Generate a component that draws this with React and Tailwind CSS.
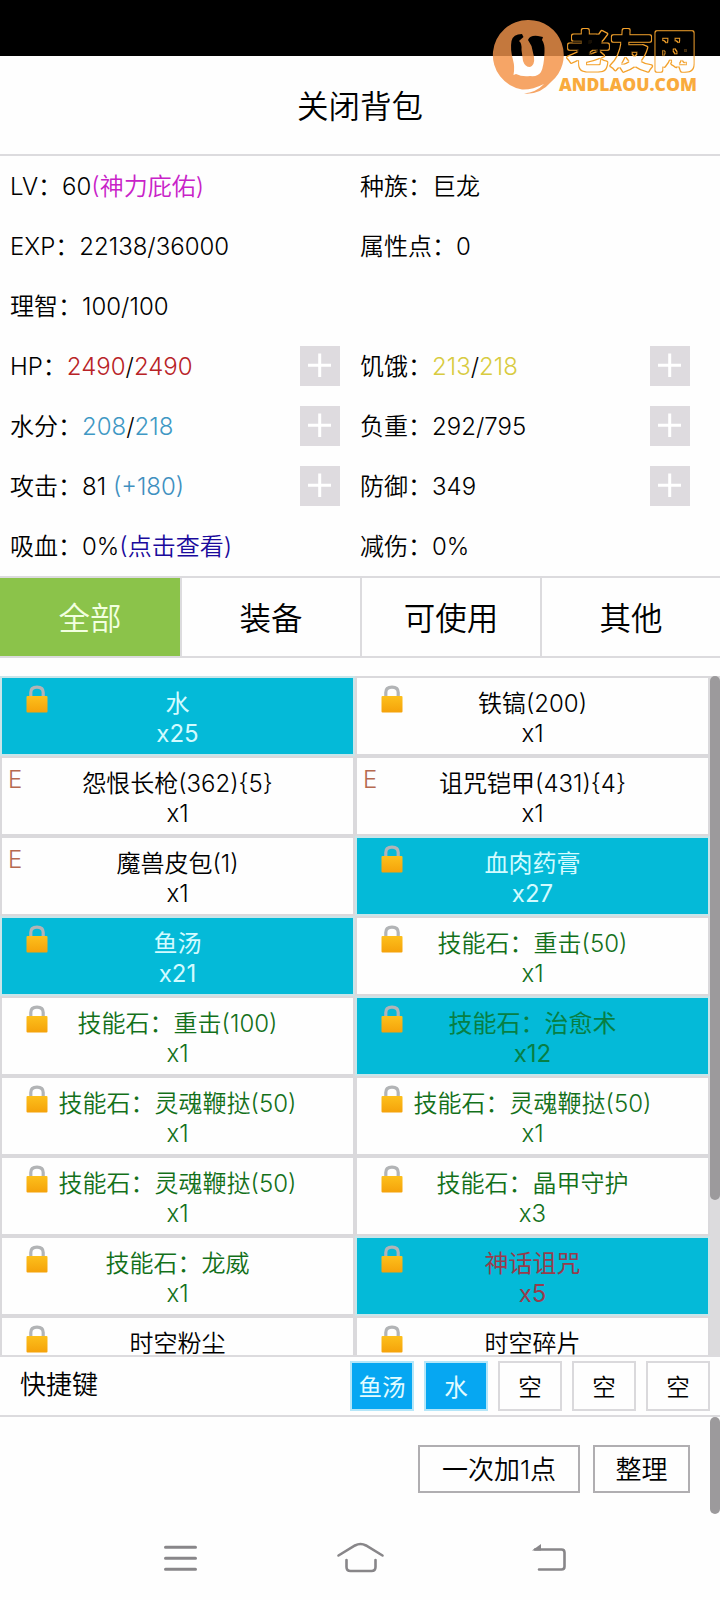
import { useState } from 'react';

const stats = [
  [{ label: 'LV', parts: [['60'], ['(神力庇佑)', 'text-[#c822c8]']] }, { label: '种族', parts: [['巨龙']] }],
  [{ label: 'EXP', parts: [['22138/36000']] }, { label: '属性点', parts: [['0']] }],
  [{ label: '理智', parts: [['100/100']] }, null],
  [
    { label: 'HP', parts: [['2490', 'text-[#b82226]'], ['/'], ['2490', 'text-[#b82226]']], add: true },
    { label: '饥饿', parts: [['213', 'text-[#d8cb40]'], ['/'], ['218', 'text-[#d8cb40]']], add: true },
  ],
  [
    { label: '水分', parts: [['208', 'text-[#3f98c4]'], ['/'], ['218', 'text-[#3f98c4]']], add: true },
    { label: '负重', parts: [['292/795']], add: true },
  ],
  [
    { label: '攻击', parts: [['81 '], ['(+180)', 'text-[#3f90c0]']], add: true },
    { label: '防御', parts: [['349']], add: true },
  ],
  [{ label: '吸血', parts: [['0%'], ['(点击查看)', 'text-[#1a0a9c]']] }, { label: '减伤', parts: [['0%']] }],
];

const tabs = ['全部', '装备', '可使用', '其他'];

const items = [
  { name: '水', count: 25, mark: 'lock', active: true, color: 'text-[#d2fbff]' },
  { name: '铁镐(200)', count: 1, mark: 'lock' },
  { name: '怨恨长枪(362){5}', count: 1, mark: 'E' },
  { name: '诅咒铠甲(431){4}', count: 1, mark: 'E' },
  { name: '魔兽皮包(1)', count: 1, mark: 'E' },
  { name: '血肉药膏', count: 27, mark: 'lock', active: true, color: 'text-[#d2fbff]' },
  { name: '鱼汤', count: 21, mark: 'lock', active: true, color: 'text-[#d2fbff]' },
  { name: '技能石：重击(50)', count: 1, mark: 'lock', color: 'text-[#13701a]' },
  { name: '技能石：重击(100)', count: 1, mark: 'lock', color: 'text-[#13701a]' },
  { name: '技能石：治愈术', count: 12, mark: 'lock', active: true, color: 'text-[#077f45]' },
  { name: '技能石：灵魂鞭挞(50)', count: 1, mark: 'lock', color: 'text-[#13701a]' },
  { name: '技能石：灵魂鞭挞(50)', count: 1, mark: 'lock', color: 'text-[#13701a]' },
  { name: '技能石：灵魂鞭挞(50)', count: 1, mark: 'lock', color: 'text-[#13701a]' },
  { name: '技能石：晶甲守护', count: 3, mark: 'lock', color: 'text-[#13701a]' },
  { name: '技能石：龙威', count: 1, mark: 'lock', color: 'text-[#13701a]' },
  { name: '神话诅咒', count: 5, mark: 'lock', active: true, color: 'text-[#963c4c]' },
  { name: '时空粉尘', mark: 'lock' },
  { name: '时空碎片', mark: 'lock' },
];

const shortcuts = ['鱼汤', '水', '空', '空', '空'];

const LockIcon = () => (
  <svg className="absolute left-[24px] top-[7px] h-[28px] w-[22px]" viewBox="0 0 22 28">
    <defs>
      <linearGradient id="lockBody" x1="0" y1="0" x2="0" y2="1">
        <stop offset="0" stopColor="#fdc01c" />
        <stop offset="1" stopColor="#f5a20a" />
      </linearGradient>
    </defs>
    <path d="M4.8 12V7.5Q4.8 2.2 11 2.2T17.2 7.5V12" fill="none" stroke="#b2b4b6" strokeWidth="3.2" />
    <rect x="0.5" y="11" width="21" height="16.5" rx="1" fill="url(#lockBody)" />
  </svg>
);

const Watermark = () => (
  <svg className="absolute left-[480px] top-0 h-[110px] w-[240px]" viewBox="0 0 240 110">
    <defs>
      <linearGradient id="badge" gradientUnits="userSpaceOnUse" x1="0" y1="0" x2="0" y2="112">
        <stop offset="0.5" stopColor="#c4783d" />
        <stop offset="0.5" stopColor="#f6a566" />
      </linearGradient>
      <linearGradient id="backdrop" gradientUnits="userSpaceOnUse" x1="0" y1="0" x2="0" y2="112">
        <stop offset="0.5" stopColor="#000" />
        <stop offset="0.5" stopColor="#fff" />
      </linearGradient>
      <filter id="outline">
        <feMorphology in="SourceAlpha" operator="erode" radius="1" result="inner" />
        <feComposite in="SourceGraphic" in2="inner" operator="out" />
      </filter>
    </defs>
    <path d="M48.5 20A35 35 0 0 0 42 89.5Q52 90 64 84Q56 92.5 44 93.5Q60 95 71 82A35 35 0 0 0 48.5 20Z" fill="url(#badge)" />
    <path
      d="M31.5 41Q33 34 42 34L43.5 37L39 41Q42 43 41.5 50L43 61Q45 67 50 67Q55 65 54 57L51.5 46L48 40Q50 35 58 36L63 37L62 40Q65 44 64.5 52Q64 66 61 72Q58 77 50 76Q42 77 36 74L33.5 75Q35 67 33 60Q30 49 31.5 41Z"
      fill="url(#backdrop)"
    />
    <text
      x="87"
      y="67"
      textLength="129"
      fontFamily="'Noto Sans CJK SC', sans-serif"
      fontSize="43"
      fontWeight="700"
      fill="#f3a12c"
      stroke="#f3a12c"
      strokeWidth="3.6"
      strokeLinejoin="round"
      filter="url(#outline)"
    >
      老友网
    </text>
    <text x="79" y="91" textLength="138" lengthAdjust="spacingAndGlyphs" fontFamily="'Open Sans', sans-serif" fontSize="18" fontWeight="800" fill="#f9ab3d">
      ANDLAOU.COM
    </text>
  </svg>
);

const Stat = ({ stat }) => (
  <div className="flex w-[350px] items-center justify-between px-[10px]">
    {stat && (
      <p className="whitespace-pre pt-0.5">
        {stat.label}：
        {stat.parts.map(([text, color], i) => <span key={i} className={color}>{text}</span>)}
      </p>
    )}
    {stat?.add && (
      <button className="flex size-10 items-center justify-center bg-[#dedbdf]">
        <svg className="size-10" viewBox="0 0 40 40" fill="none" stroke="#fff" strokeWidth="3">
          <path d="M8 19.3h23M19.7 7.5v23.5" />
        </svg>
      </button>
    )}
  </div>
);

const Item = ({ item }) => (
  <div className={`relative h-20 border-2 pt-[11px] text-center leading-[30px] ${item.active ? 'border-[#c9e5e9] bg-[#04bad8] font-normal' : 'border-[#dad9dc] bg-[#fefefe]'} ${item.color || ''}`}>
    {item.mark === 'lock' ? <LockIcon /> : <span className="absolute left-[6px] top-[7px] text-[#b66a50]">E</span>}
    <p>{item.name}</p>
    {item.count && <p>x{item.count}</p>}
  </div>
);

const App = () => {
  const [tab, setTab] = useState(0);

  return (
    <div className="relative flex h-[1600px] w-[720px] flex-col overflow-hidden bg-[#fefefe] font-['Inter','Noto_Sans_CJK_SC',sans-serif] text-[24px] font-[350] text-black">
      <div className="h-14 shrink-0 bg-black" />
      <header className="flex h-[100px] shrink-0 items-center justify-center border-b-2 border-[#dcdbde] pt-1 text-[31.5px]">关闭背包</header>

      <section className="shrink-0">
        {stats.map((row, i) => (
          <div key={i} className="flex h-[60px]">
            {row.map((stat, j) => <Stat key={j} stat={stat} />)}
          </div>
        ))}
      </section>

      <nav className="grid h-[82px] shrink-0 grid-cols-4 border-y-2 border-[#dcdbde] text-[31.5px]">
        {tabs.map((name, i) => (
          <button
            key={name}
            onClick={() => setTab(i)}
            className={`border-[#dcdbde] pt-1 ${i > 0 ? 'border-l-2' : ''} ${tab === i ? 'bg-[#8bc34a] text-[#f2ffe0]' : ''}`}
          >
            {name}
          </button>
        ))}
      </nav>

      <div className="mt-[18px] flex h-[679px] shrink-0 overflow-hidden">
        <div className="grid w-[710px] shrink-0 grid-cols-2 content-start">
          {items.map((item, i) => <Item key={i} item={item} />)}
        </div>
        <div className="w-[10px] bg-[#dcdbdd]">
          <div className="h-[524px] rounded-full bg-[#9c9a9c]" />
        </div>
      </div>

      <div className="flex h-[62px] shrink-0 items-center justify-between border-y-2 border-[#dcdbde] pl-5 pr-[10px]">
        <span className="pb-1 text-[26px]">快捷键</span>
        <div className="flex gap-[10px]">
          {shortcuts.map((name, i) => (
            <button key={i} className={`h-[50px] w-16 border-2 pt-1 text-[23.5px] ${name === '空' ? 'border-[#dad9dc]' : 'border-[#b5e6f8] bg-[#06a7f2] font-normal text-[#e2fcff]'}`}>
              {name}
            </button>
          ))}
        </div>
      </div>

      <div className="flex h-[97px] shrink-0 justify-between">
        <div className="flex w-[690px] justify-end gap-[13px] pt-[28px] text-[26px]">
          <button className="h-12 w-[162px] border-2 border-[#b0aeb1]">一次加1点</button>
          <button className="h-12 w-[97px] border-2 border-[#b0aeb1]">整理</button>
        </div>
        <div className="w-[10px] rounded-full bg-[#9c9a9c]" />
      </div>

      <footer className="flex grow items-start pl-[160px] pt-[22px] text-[#888689]">
        <svg className="h-11 w-10" viewBox="0 0 40 44" fill="none" stroke="currentColor" strokeWidth="3" strokeLinecap="round">
          <path d="M5.5 11.3h30M5.5 22.3h30M5.5 33.3h30" />
        </svg>
        <svg className="ml-[135px] h-11 w-[50px]" viewBox="0 0 50 44" fill="none" stroke="currentColor" strokeWidth="2.6" strokeLinecap="round">
          <path d="M3.5 19.5L20 9.5Q25.5 6.5 31 9.5L47.5 19.5M11.5 24V31Q11.5 35 15.5 35H36.5Q40.5 35 40.5 31V24" />
        </svg>
        <svg className="ml-[145px] h-11 w-10" viewBox="0 0 40 44" fill="none" stroke="currentColor" strokeWidth="2.6" strokeLinecap="round">
          <path d="M5 13.5H31.5Q34.5 13.5 34.5 16.5V30.5Q34.5 33.5 31.5 33.5H9" />
          <path d="M2 14.5L11 8V14.5Z" fill="currentColor" stroke="none" />
        </svg>
      </footer>

      <Watermark />
    </div>
  );
};

export default App;
